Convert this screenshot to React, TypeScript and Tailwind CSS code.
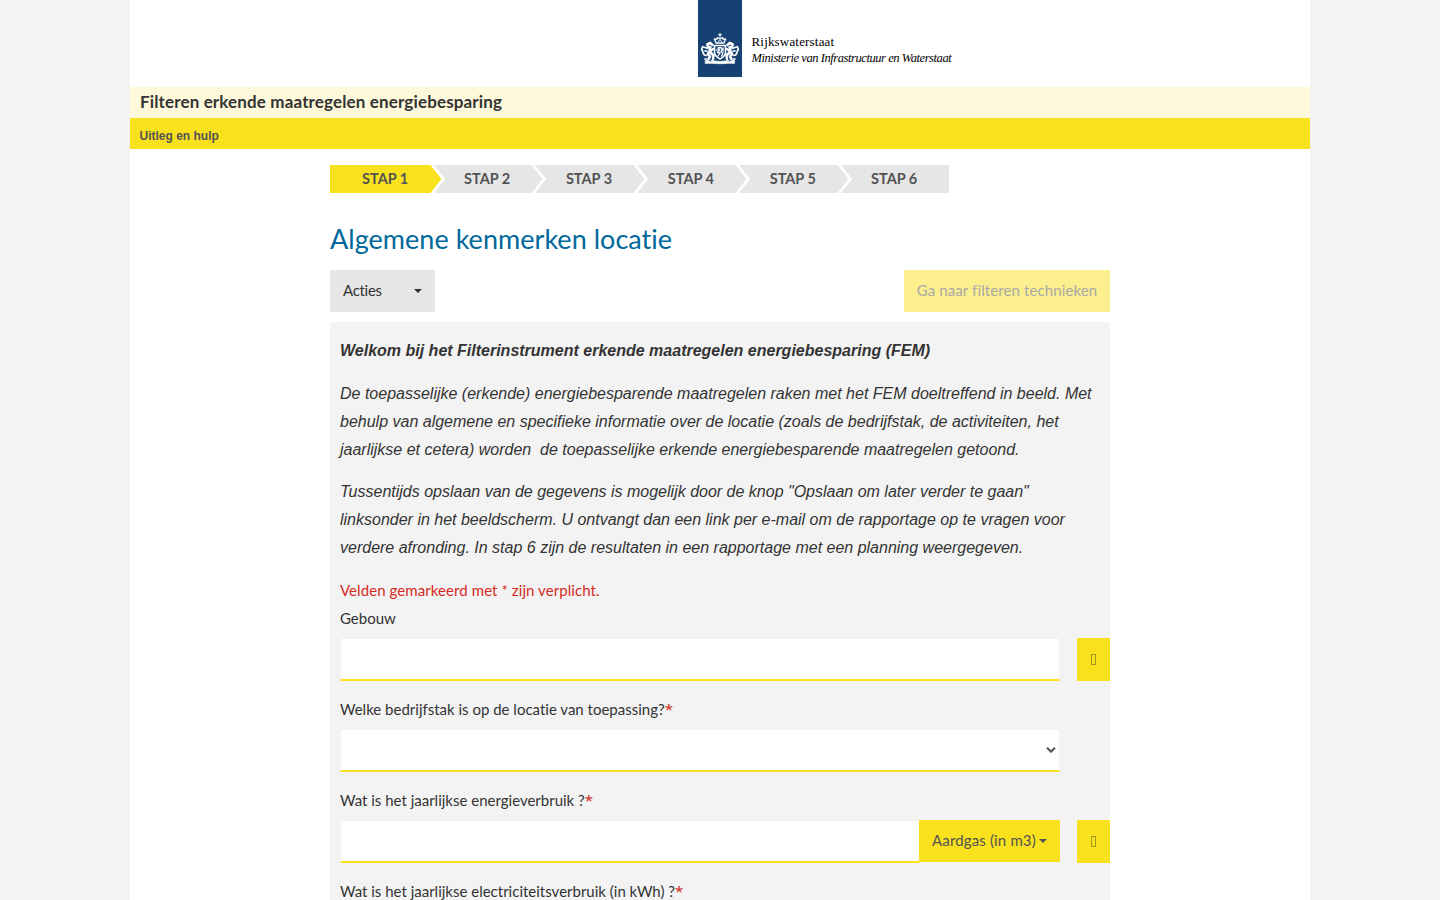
import type { ReactNode } from "react";

function Crest() {
  return (
    <svg viewBox="0 0 40 34" className="h-[34px] w-10" fill="none" stroke="#fff" strokeLinecap="round" strokeLinejoin="round">
      {/* crown */}
      <path d="M20 1.500v3M18.600 2.800h2.800" strokeWidth="1.100" />
      <path d="M16 11l-1.700-4.200 2.400.8.8-2 2.500 1 2.500-1 .8 2 2.400-.8L24 11z" strokeWidth="1.300" />
      <path d="M18.500 9.500L20 7.500l1.500 2" strokeWidth="1" />
      {/* shield */}
      <path d="M14.500 13.500h11v7c0 3.500-3 5-5.500 6.500-2.500-1.500-5.500-3-5.500-6.500z" strokeWidth="1.600" />
      <path d="M18 24l2-3-2.500-.5 2-2.500-1.500-2 3-.5 1 2-1 2.500 2 1-1.500 3M23 16v3M17 17.500v1" strokeWidth="1.300" />
      {/* left supporter */}
      <path d="M12.500 13L10 10.800 7.300 12.300l.7 2.400 2.500.5M9.500 15l.5 4 3-2M10 19l-2.200 3 2.200 2.500-1.500 2.500M10.500 20.500l3 3-.5 3.500" strokeWidth="2.500" />
      <path d="M7.500 16.300l-3.200-1M7 19H5M6.500 23.500c-4 0-3-3-4-4.500S1.500 16 3 14.500M6.500 27H5" strokeWidth="1.700" />
      {/* right supporter */}
      <path d="M27.500 13l2.500-2.200 2.700 1.500-.7 2.400-2.500.5M30.500 15l-.5 4-3-2M30 19l2.200 3-2.200 2.500 1.500 2.500M29.500 20.500l-3 3 .5 3.500" strokeWidth="2.500" />
      <path d="M32.500 16.300l3.200-1M33 19h2M33.500 23.500c4 0 3-3 4-4.500s1-3-.5-4.500M33.500 27H35" strokeWidth="1.700" />
      {/* ribbon */}
      <path d="M5.500 28.500c5.500-.8 10 1 14.500 1s9-1.800 14.500-1v3c-5-.8-9.500.2-14.500.2s-9.500-1-14.500-.2z" fill="#fff" strokeWidth=".7" />
      <path d="M9 28.600l2 .500M31 28.600l-2 .500" stroke="#154273" strokeWidth=".8" />
    </svg>
  );
}

function Step({ label, index }: { label: string; index: number }) {
  return (
    <li className={`relative flex h-7 items-center pb-px ${index === 0 ? "w-[102px] bg-[#f9e11e] pl-8" : index === 5 ? "w-[109.400px] bg-[#e6e6e6] pl-[31.500px]" : "w-[101.900px] bg-[#e6e6e6] pl-8"}`}>
      {label}
      {index < 5 && (
        <svg viewBox="0 0 16 28" className="absolute top-0 left-full z-10 -ml-[2.500px] h-7 w-4">
          <path d="M0 0h4l11.200 14L4 28H0z" fill="#fff" />
          <path d="M0 0h.5l11 14L.5 28H0z" fill={index === 0 ? "#f9e11e" : "#e6e6e6"} />
        </svg>
      )}
    </li>
  );
}

function Caret() {
  return (
    <svg viewBox="0 0 8 4" className="mt-0.5 h-1 w-2" fill="currentColor">
      <path d="M0 0h8L4 4z" />
    </svg>
  );
}

function Field({ label, required, help, children }: { label: string; required?: boolean; help?: boolean; children: ReactNode }) {
  return (
    <div className="h-[91px]">
      <label className="block h-[34px] leading-7">
        {label}
        {required && <span className="font-['Noto_Sans',sans-serif] leading-none text-[#d52b1e]">*</span>}
      </label>
      <div className="flex h-[43px] justify-between">
        <div className="flex w-[720px]">{children}</div>
        {help && (
          <button className="flex w-[33px] items-center justify-center bg-[#f9e11e] pb-px">
            <span className="h-[11px] w-[5px] border border-[#a4951f]" />
          </button>
        )}
      </div>
    </div>
  );
}

const steps = ["STAP 1", "STAP 2", "STAP 3", "STAP 4", "STAP 5", "STAP 6"];

export default function App() {
  return (
    <div className="h-[900px] overflow-hidden bg-[#f3f3f3] font-['Lato',sans-serif] text-[15px] text-[#333] [font-variant-ligatures:none]">
      <div className="mx-auto h-full w-[1180px] bg-white">
        <header className="flex h-[87px] pl-[568px]">
          <div className="flex h-[77px] w-11 items-start justify-center bg-[#154273] pt-8">
            <Crest />
          </div>
          <div className="pt-[34px] pl-[9.500px] font-['Liberation_Serif',serif] whitespace-nowrap text-black">
            <p className="text-[13px] leading-4 tracking-[0.180px]">Rijkswaterstaat</p>
            <p className="text-[12.500px] leading-4 tracking-[-0.430px] italic">Ministerie van Infrastructuur en Waterstaat</p>
          </div>
        </header>
        <h1 className="h-[31px] bg-[#fef9db] pl-2.5 text-[17px] leading-[29px] font-bold tracking-[0.140px]">
          Filteren erkende maatregelen energiebesparing
        </h1>
        <nav className="h-[31px] bg-[#f9e11e] pl-[9.500px] font-['Liberation_Sans',sans-serif] text-xs leading-[36px] font-bold text-[#535353]">
          Uitleg en hulp
        </nav>

        <main className="mx-auto w-[780px] pt-4">
          <ol className="flex text-[14.500px] font-bold text-[#535353]">
            {steps.map((s, i) => (
              <Step key={s} label={s} index={i} />
            ))}
          </ol>
          <h2 className="mt-[26px] text-[27px] leading-10 tracking-[0.030px] text-[#01689b]">Algemene kenmerken locatie</h2>
          <div className="mt-[11px] flex h-[42px] justify-between">
            <button className="flex w-[105px] items-center justify-between bg-[#e6e6e6] px-[13px] pb-0.5 tracking-[-0.300px]">
              Acties
              <Caret />
            </button>
            <button className="w-[206px] bg-[#fcef8e] pb-0.5 tracking-[0.110px] text-[#a9a9a9]">Ga naar filteren technieken</button>
          </div>

          <section className="mt-2.5 h-[600px] bg-[#f3f3f3] pt-[15px] pl-2.5">
            <div className="font-['Liberation_Sans',sans-serif] text-base leading-7 whitespace-nowrap italic">
              <p className="mb-[15px] font-bold">Welkom bij het Filterinstrument erkende maatregelen energiebesparing (FEM)</p>
              <p className="mb-3.5">
                De toepasselijke (erkende) energiebesparende maatregelen raken met het FEM doeltreffend in beeld. Met
                <br />
                behulp van algemene en specifieke informatie over de locatie (zoals de bedrijfstak, de activiteiten, het
                <br />
                jaarlijkse et cetera) worden&nbsp; de toepasselijke erkende energiebesparende maatregelen getoond.
              </p>
              <p className="mb-3.5">
                Tussentijds opslaan van de gegevens is mogelijk door de knop "Opslaan om later verder te gaan"
                <br />
                linksonder in het beeldscherm. U ontvangt dan een link per e-mail om de rapportage op te vragen voor
                <br />
                verdere afronding. In stap 6 zijn de resultaten in een rapportage met een planning weergegeven.
              </p>
            </div>
            <p className="leading-7 tracking-[0.080px] text-[#d52b1e]">Velden gemarkeerd met * zijn verplicht.</p>

            <Field label="Gebouw" help>
              <input className="w-full border border-b-2 border-[#f3f3f3] border-b-[#f9e11e] bg-white outline-none" />
            </Field>
            <Field label="Welke bedrijfstak is op de locatie van toepassing?" required>
              <div className="flex w-full items-center justify-end border border-b-2 border-[#f3f3f3] border-b-[#f9e11e] bg-white pr-[3px]">
                <svg viewBox="0 0 10 6" className="h-1.5 w-2.5" fill="none" stroke="#535353" strokeWidth="2">
                  <path d="M1 .7l4 4 4-4" />
                </svg>
              </div>
            </Field>
            <Field label="Wat is het jaarlijkse energieverbruik ?" required help>
              <input className="w-[579px] border border-r-0 border-b-2 border-[#f3f3f3] border-b-[#f9e11e] bg-white outline-none" />
              <button className="flex h-[42px] w-[141px] items-center justify-between bg-[#f9e11e] px-[13px] pb-0.5 tracking-[0.150px] whitespace-nowrap text-[#535353]">
                Aardgas (in m3)
                <Caret />
              </button>
            </Field>
            <Field label="Wat is het jaarlijkse electriciteitsverbruik (in kWh) ?" required>
              <input className="w-full border border-b-2 border-[#f3f3f3] border-b-[#f9e11e] bg-white outline-none" />
            </Field>
          </section>
        </main>
      </div>
    </div>
  );
}
